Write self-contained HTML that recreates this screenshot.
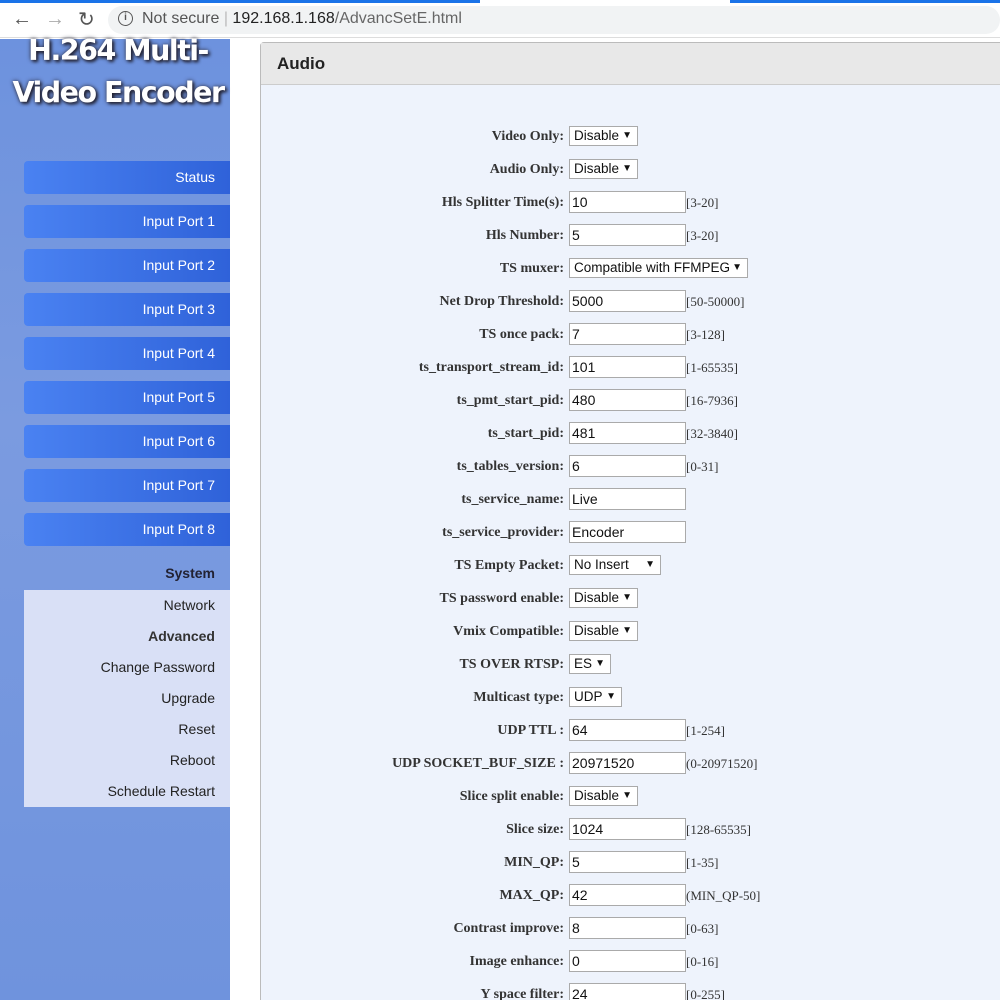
<!DOCTYPE html>
<html style="overflow:hidden;height:1000px"><head><style>
*{margin:0;padding:0;box-sizing:border-box}
body{width:1000px;height:1000px;overflow:hidden;background:#fff;font-family:"Liberation Sans",sans-serif;position:relative}
.top{position:absolute;left:0;top:0;width:1000px;height:38px;background:#fff;border-bottom:1px solid #ddd}
.top .line{position:absolute;left:0;top:0;width:480px;height:3px;background:#1a73e8}
.top .line2{position:absolute;left:730px;top:0;width:270px;height:3px;background:#1a73e8}
.omni{position:absolute;left:108px;top:6px;width:892px;height:28px;background:#f1f3f4;border-radius:14px}
.side{position:absolute;left:0;top:39px;width:230px;height:961px;background:linear-gradient(180deg,#6d92de 0%,#7b9be0 40%,#6f93dd 100%)}
.logo{position:absolute;left:-2px;top:30px;width:240px;text-align:center;color:#fff;font-weight:bold;font-size:28.5px;line-height:42px;text-shadow:2px 2px 3px #223,0 0 4px #334;font-family:"DejaVu Sans",sans-serif;letter-spacing:-1.5px;white-space:nowrap}
.btn{position:absolute;left:24px;width:206px;height:33px;background:linear-gradient(90deg,#4a82f2,#2f62d9);border-radius:4px 0 0 4px;color:#fff;font-size:14px;text-align:right;padding-right:15px;line-height:33px}
.sys{position:absolute;left:0;top:565px;width:215px;text-align:right;font-weight:bold;font-size:14px;color:#223}
.sub{position:absolute;left:24px;top:590px;width:206px;height:217px;background:#d9e0f6}
.sub div{height:31px;line-height:31px;text-align:right;padding-right:15px;font-size:14px;color:#222}
.panel{position:absolute;left:260px;top:42px;width:760px;height:990px;border:1px solid #bbb;border-radius:4px;background:#eef3fc}
.ph{height:42px;background:#e8e8e8;border-bottom:1px solid #ccc;font-weight:bold;font-size:17px;line-height:42px;padding-left:16px;color:#222}
.row{position:absolute;left:260px;height:22px;width:740px}
.lb{position:absolute;right:436px;top:1px;line-height:22px;font-family:"Liberation Serif",serif;font-weight:bold;font-size:14px;color:#333;white-space:nowrap}
.in{position:absolute;left:309px;top:0;width:117px;height:22px;border:1px solid #aaa;background:#fff;font-size:14px;line-height:20px;padding-left:2px;color:#111}
.sel{position:absolute;left:309px;top:1px;height:20px;border:1px solid #aaa;background:#fff;font-size:13.5px;line-height:18px;padding-left:4px;color:#111;white-space:nowrap}
.sel:after{content:"▼";position:absolute;right:5px;top:0;font-size:10px}
.rg{position:absolute;left:426px;top:4px;font-family:"Liberation Serif",serif;font-size:13px;color:#333;white-space:nowrap}
</style></head><body>
<div class="top"><div class="line"></div><div class="line2"></div><div class="omni"></div>
<div style="position:absolute;left:12px;top:8px;font-size:20px;color:#555">←</div>
<div style="position:absolute;left:45px;top:8px;font-size:20px;color:#aaa">→</div>
<div style="position:absolute;left:78px;top:7px;font-size:20px;color:#555">↻</div>
<div style="position:absolute;left:118px;top:11px;width:15px;height:15px;border:1.5px solid #555;border-radius:50%;font-size:10px;text-align:center;line-height:12px;color:#555;font-weight:bold">i</div>
<div style="position:absolute;left:142px;top:10px;font-size:16px;color:#555">Not secure <span style="color:#bbb">|</span> <span style="color:#222">192.168.1.168</span><span style="color:#666">/AdvancSetE.html</span></div>
</div>
<div class="side"></div>
<div class="logo">H.264 Multi-<br>Video Encoder</div>
<div class="btn" style="top:161px">Status</div>
<div class="btn" style="top:205px">Input Port 1</div>
<div class="btn" style="top:249px">Input Port 2</div>
<div class="btn" style="top:293px">Input Port 3</div>
<div class="btn" style="top:337px">Input Port 4</div>
<div class="btn" style="top:381px">Input Port 5</div>
<div class="btn" style="top:425px">Input Port 6</div>
<div class="btn" style="top:469px">Input Port 7</div>
<div class="btn" style="top:513px">Input Port 8</div>
<div class="sys">System</div>
<div class="sub"><div>Network</div><div style="font-weight:bold;color:#333">Advanced</div><div>Change Password</div><div>Upgrade</div><div>Reset</div><div>Reboot</div><div>Schedule Restart</div></div>
<div class="panel"><div class="ph">Audio</div></div>
<div class="row" style="top:125px"><span class="lb">Video Only:</span><span class="sel" style="width:69px">Disable</span></div>
<div class="row" style="top:158px"><span class="lb">Audio Only:</span><span class="sel" style="width:69px">Disable</span></div>
<div class="row" style="top:191px"><span class="lb">Hls Splitter Time(s):</span><span class="in">10</span><span class="rg">[3-20]</span></div>
<div class="row" style="top:224px"><span class="lb">Hls Number:</span><span class="in">5</span><span class="rg">[3-20]</span></div>
<div class="row" style="top:257px"><span class="lb">TS muxer:</span><span class="sel" style="width:179px">Compatible with FFMPEG</span></div>
<div class="row" style="top:290px"><span class="lb">Net Drop Threshold:</span><span class="in">5000</span><span class="rg">[50-50000]</span></div>
<div class="row" style="top:323px"><span class="lb">TS once pack:</span><span class="in">7</span><span class="rg">[3-128]</span></div>
<div class="row" style="top:356px"><span class="lb">ts_transport_stream_id:</span><span class="in">101</span><span class="rg">[1-65535]</span></div>
<div class="row" style="top:389px"><span class="lb">ts_pmt_start_pid:</span><span class="in">480</span><span class="rg">[16-7936]</span></div>
<div class="row" style="top:422px"><span class="lb">ts_start_pid:</span><span class="in">481</span><span class="rg">[32-3840]</span></div>
<div class="row" style="top:455px"><span class="lb">ts_tables_version:</span><span class="in">6</span><span class="rg">[0-31]</span></div>
<div class="row" style="top:488px"><span class="lb">ts_service_name:</span><span class="in">Live</span></div>
<div class="row" style="top:521px"><span class="lb">ts_service_provider:</span><span class="in">Encoder</span></div>
<div class="row" style="top:554px"><span class="lb">TS Empty Packet:</span><span class="sel" style="width:92px">No Insert</span></div>
<div class="row" style="top:587px"><span class="lb">TS password enable:</span><span class="sel" style="width:69px">Disable</span></div>
<div class="row" style="top:620px"><span class="lb">Vmix Compatible:</span><span class="sel" style="width:69px">Disable</span></div>
<div class="row" style="top:653px"><span class="lb">TS OVER RTSP:</span><span class="sel" style="width:42px">ES</span></div>
<div class="row" style="top:686px"><span class="lb">Multicast type:</span><span class="sel" style="width:53px">UDP</span></div>
<div class="row" style="top:719px"><span class="lb">UDP TTL :</span><span class="in">64</span><span class="rg">[1-254]</span></div>
<div class="row" style="top:752px"><span class="lb">UDP SOCKET_BUF_SIZE :</span><span class="in">20971520</span><span class="rg">(0-20971520]</span></div>
<div class="row" style="top:785px"><span class="lb">Slice split enable:</span><span class="sel" style="width:69px">Disable</span></div>
<div class="row" style="top:818px"><span class="lb">Slice size:</span><span class="in">1024</span><span class="rg">[128-65535]</span></div>
<div class="row" style="top:851px"><span class="lb">MIN_QP:</span><span class="in">5</span><span class="rg">[1-35]</span></div>
<div class="row" style="top:884px"><span class="lb">MAX_QP:</span><span class="in">42</span><span class="rg">(MIN_QP-50]</span></div>
<div class="row" style="top:917px"><span class="lb">Contrast improve:</span><span class="in">8</span><span class="rg">[0-63]</span></div>
<div class="row" style="top:950px"><span class="lb">Image enhance:</span><span class="in">0</span><span class="rg">[0-16]</span></div>
<div class="row" style="top:983px"><span class="lb">Y space filter:</span><span class="in">24</span><span class="rg">[0-255]</span></div>
</body></html>
